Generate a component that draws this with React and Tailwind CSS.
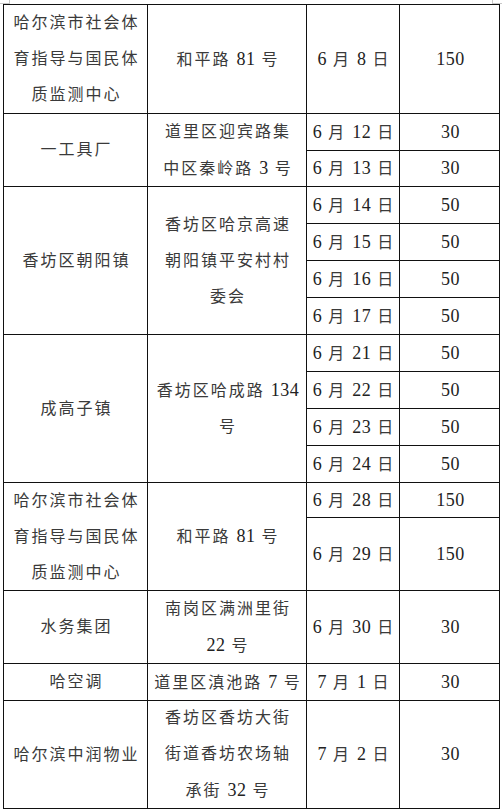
import React from "react";

const rows = [
  { c: "哈尔滨市社会体|育指导与国民体|质监测中心", s: 1 },
  { c: "和平路 81 号", s: 1 },
  { c: "6 月 8 日" },
  { c: "150" },
  { c: "一工具厂", s: 2 },
  { c: "道里区迎宾路集|中区秦岭路 3 号", s: 2 },
  { c: "6 月 12 日" },
  { c: "30" },
  { c: "6 月 13 日" },
  { c: "30" },
  { c: "香坊区朝阳镇", s: 4 },
  { c: "香坊区哈京高速|朝阳镇平安村村|委会", s: 4 },
  { c: "6 月 14 日" },
  { c: "50" },
  { c: "6 月 15 日" },
  { c: "50" },
  { c: "6 月 16 日" },
  { c: "50" },
  { c: "6 月 17 日" },
  { c: "50" },
  { c: "成高子镇", s: 4 },
  { c: "香坊区哈成路 134|号", s: 4 },
  { c: "6 月 21 日" },
  { c: "50" },
  { c: "6 月 22 日" },
  { c: "50" },
  { c: "6 月 23 日" },
  { c: "50" },
  { c: "6 月 24 日" },
  { c: "50" },
  { c: "哈尔滨市社会体|育指导与国民体|质监测中心", s: 2 },
  { c: "和平路 81 号", s: 2 },
  { c: "6 月 28 日" },
  { c: "150" },
  { c: "6 月 29 日" },
  { c: "150" },
  { c: "水务集团" },
  { c: "南岗区满洲里街|22 号" },
  { c: "6 月 30 日" },
  { c: "30" },
  { c: "哈空调" },
  { c: "道里区滇池路 7 号" },
  { c: "7 月 1 日" },
  { c: "30" },
  { c: "哈尔滨中润物业" },
  { c: "香坊区香坊大街|街道香坊农场轴|承街 32 号" },
  { c: "7 月 2 日" },
  { c: "30" },
];

const spanClass = {
  1: "row-span-1",
  2: "row-span-2",
  4: "row-span-4",
};

function Line({ text }) {
  const parts = text.split(/(\d+)/);
  return (
    <div>
      {parts.map((p, k) =>
        /^\d+$/.test(p) ? (
          <span key={k} className="text-[18px] tracking-[0.5px] text-[#222]">
            {p}
          </span>
        ) : (
          <span key={k}>{p}</span>
        )
      )}
    </div>
  );
}

export default function App() {
  return (
    <div
      className="relative w-[502px] h-[812px] bg-white overflow-hidden"
      style={{ fontFamily: '"Liberation Serif", "Noto Sans CJK SC", serif' }}
    >
      <div className="absolute left-0 top-[3px] w-[9px] h-px bg-[#c8c8c8]" />
      <div className="absolute left-[9px] top-0 w-px h-[4px] bg-[#c8c8c8]" />
      <div className="absolute left-[492px] top-[3px] w-[10px] h-px bg-[#c8c8c8]" />
      <div className="absolute left-[492px] top-0 w-px h-[4px] bg-[#c8c8c8]" />
      <div className="pt-[4px] pl-[3px]">
        <div className="grid w-[497px] grid-cols-[144px_159px_93px_100px] grid-rows-[109px_37px_36px_37px_37px_37px_37px_37px_37px_37px_37px_35px_73px_73px_37px_108px] border-l border-t border-[#111] text-[16px] tracking-[2px] leading-[36px] text-[#3a3a3a]">
          {rows.map((r, i) => (
            <div
              key={i}
              className={`${spanClass[r.s || 1]} flex flex-col items-center justify-center text-center border-r border-b border-[#111] pl-[2px] whitespace-nowrap`}
            >
              {r.c.split("|").map((line, j) => (
                <Line key={j} text={line} />
              ))}
            </div>
          ))}
        </div>
      </div>
    </div>
  );
}
